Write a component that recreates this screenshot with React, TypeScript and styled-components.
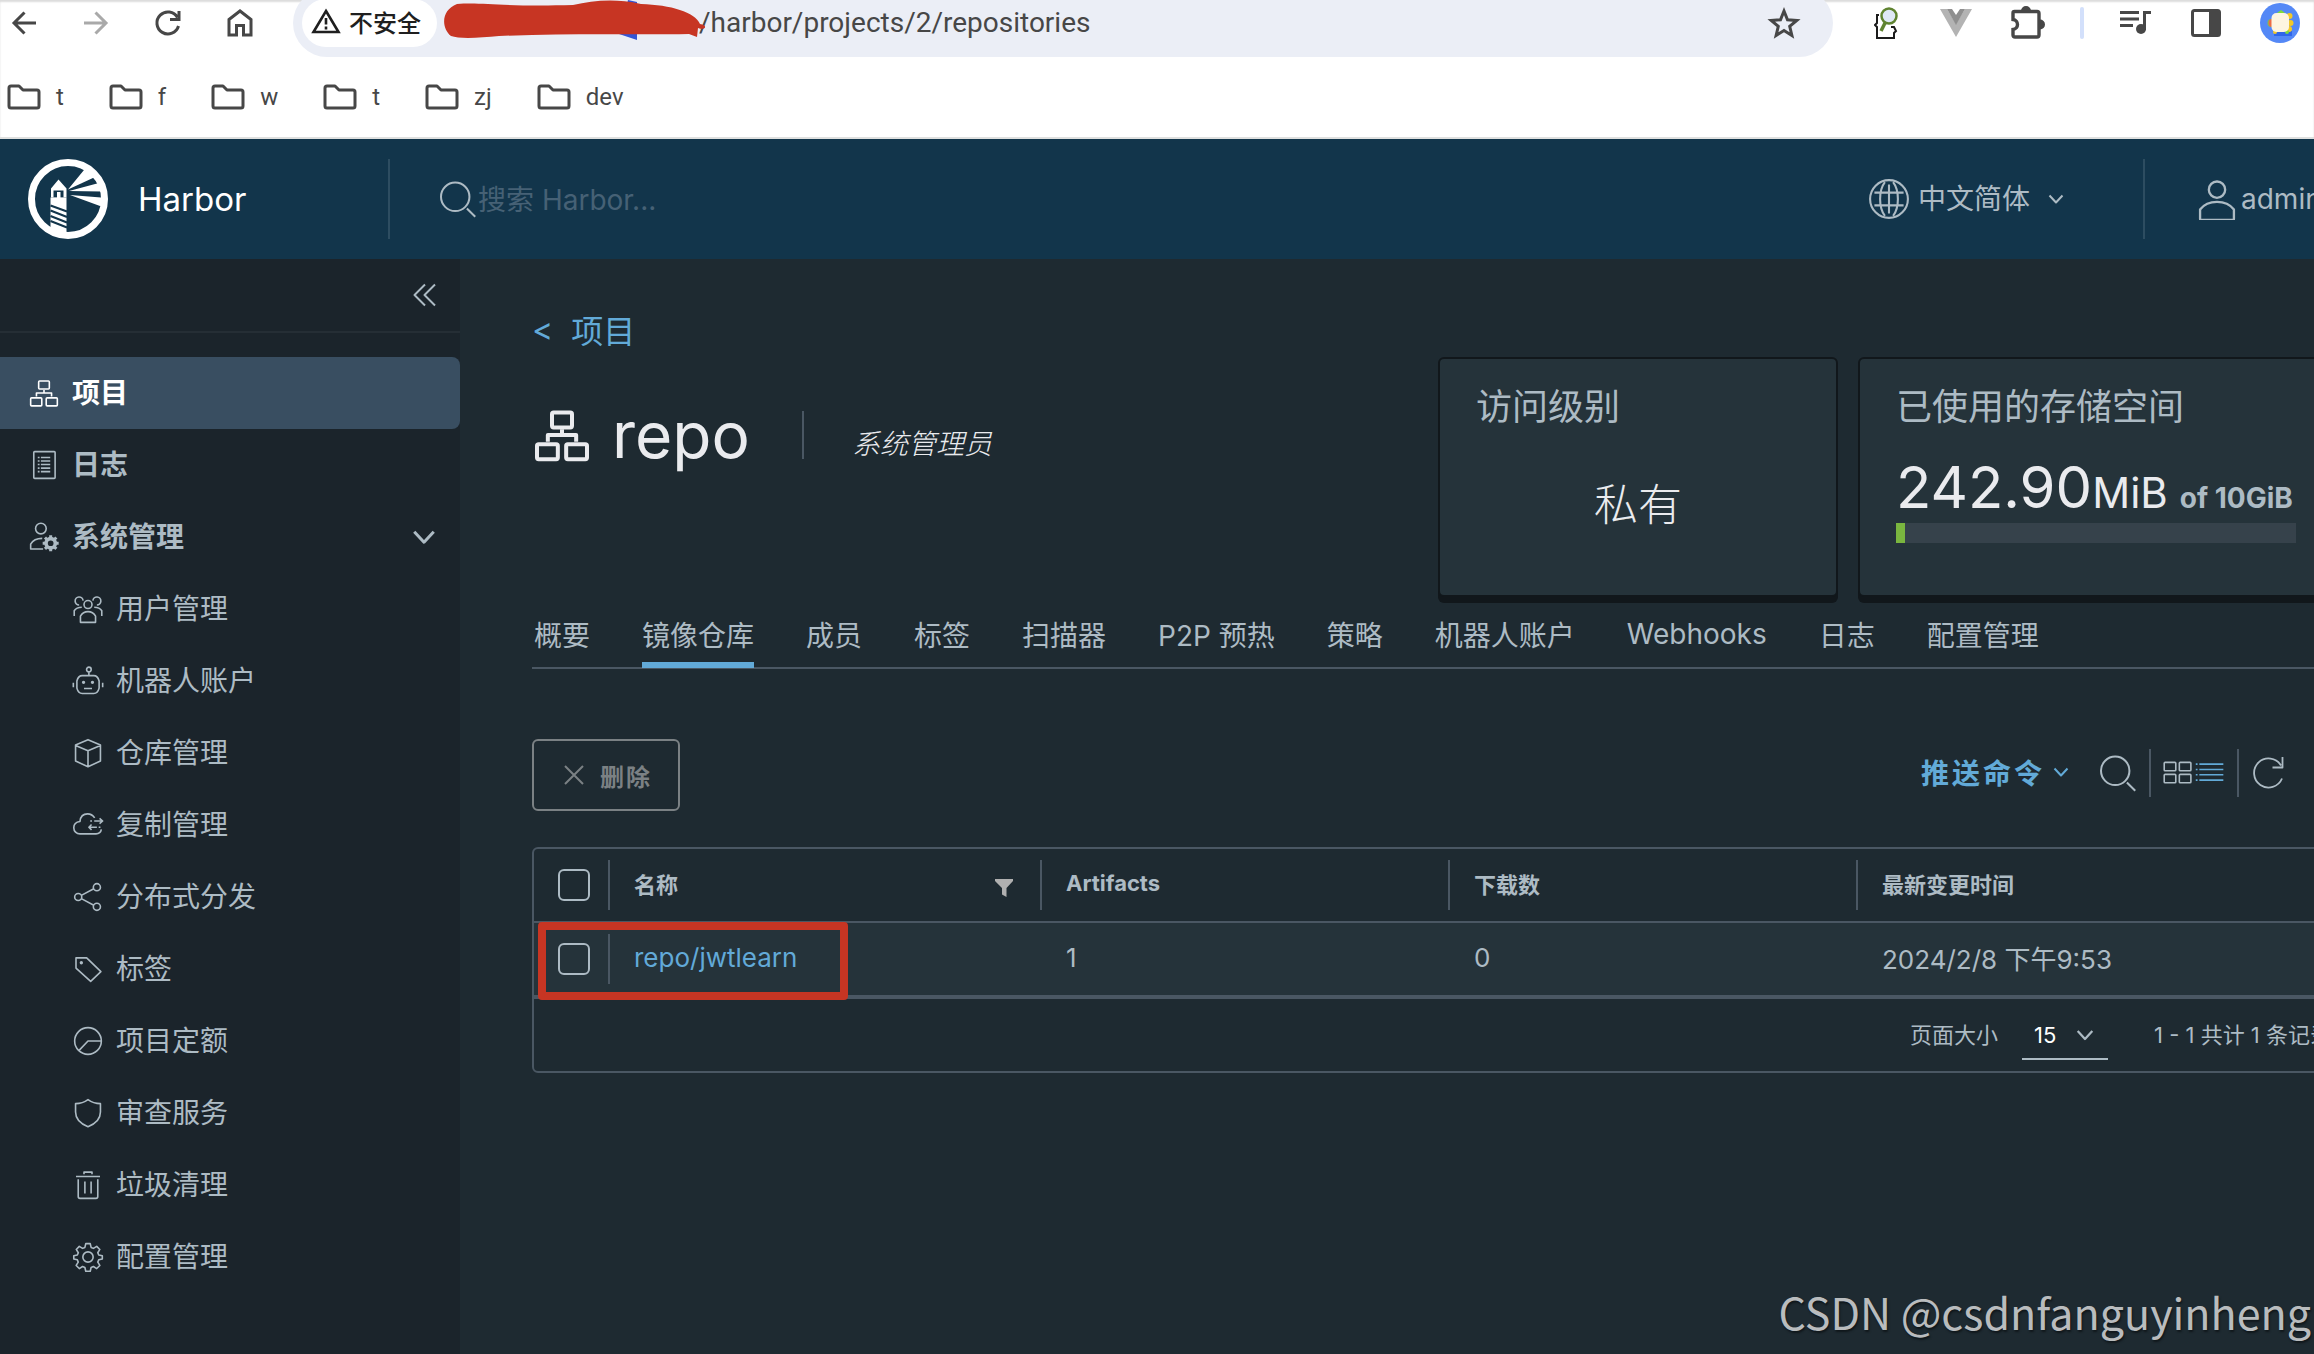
import React from "react";
import styled, { createGlobalStyle, css } from "styled-components";

const c = {
  main: "#1e2a31",
  side: "#1b242b",
  header: "#12354b",
  active: "#394e61",
  panel: "#25333a",
  line: "#4a5763",
  text: "#adbbc4",
  bright: "#eaebee",
  link: "#62aad8",
  chrome: "#474747",
};

const Global = createGlobalStyle`
  * { box-sizing: border-box; }
  html { background: ${c.main}; }
  body {
    margin: 0;
    overflow: hidden;
    background: ${c.main};
    color: ${c.text};
    font-family: Inter, "Noto Sans CJK SC", sans-serif;
    font-size: 28px;
  }
  button, input, select { font: inherit; color: inherit; }
  button { background: none; border: 0; padding: 0; cursor: pointer; }
  a { color: inherit; text-decoration: none; }
  svg { display: block; flex: none; }
`;

/* ---------- icons ---------- */

type IconProps = { size?: number; stroke?: number; children?: React.ReactNode; box?: string };

const Icon = ({ size = 32, stroke = 1.8, box = "0 0 36 36", children }: IconProps) => (
  <svg
    width={size}
    height={size}
    viewBox={box}
    fill="none"
    stroke="currentColor"
    strokeWidth={stroke}
    strokeLinecap="butt"
    strokeLinejoin="round"
    aria-hidden="true"
  >
    {children}
  </svg>
);

const OrgIcon = ({ size, stroke }: IconProps) => (
  <Icon size={size} stroke={stroke}>
    <rect x="12" y="4.5" width="12" height="9" rx="1" />
    <rect x="3" y="23.5" width="12.5" height="9" rx="1" />
    <rect x="20.5" y="23.5" width="12.5" height="9" rx="1" />
    <path d="M18 14.5v4M9.500 22v-4h17v4" />
  </Icon>
);

const LogIcon = () => (
  <Icon>
    <rect x="6.5" y="3" width="24" height="30" rx="1" />
    <path d="M14.5 9.5h10.5M14.5 13.5h10.5M14.5 17.5h10.5M14.5 21.5h10.5M14.5 25.5h10.5M11 9.5h2M11 13.5h2M11 17.5h2M11 21.5h2M11 25.5h2" />
  </Icon>
);

const AdminIcon = () => (
  <Icon>
    <circle cx="14.5" cy="8.5" r="6" />
    <path d="M17 31.500H3v-5.500c2.500-4.500 7-6.500 13-6.500" />
    <circle cx="25.500" cy="25" r="5.200" strokeWidth="4" />
    <path
      strokeWidth="3.400"
      d="M25.500 16v3M25.500 31v3M16.500 25h3M31.500 25h3M19.100 18.600l2.200 2.200M29.700 29.200l2.200 2.200M31.900 18.600l-2.200 2.200M21.300 29.200l-2.200 2.200"
    />
  </Icon>
);

const UsersIcon = () => (
  <Icon>
    <circle cx="18" cy="13" r="4.500" />
    <path d="M9.500 33v-7c2-3.500 5-5 8.500-5s6.500 1.500 8.500 5v7z" />
    <path d="M12.500 8.500A4.500 4.500 0 1 0 8 13.500M23.500 8.500A4.500 4.500 0 1 1 28 13.500M11 16c-4 0-7 1.500-8.500 4v6M25 16c4 0 7 1.500 8.500 4v6" />
  </Icon>
);

const RobotIcon = () => (
  <Icon>
    <circle cx="19" cy="5" r="2.600" />
    <path d="M19 8v4M5.500 18c1-4 3-6 6-6h13c3 0 5 2 6 6v8c-1 4-3 6-6 6h-13c-3 0-5-2-6-6zM1.500 20v5M34.500 20v5M13.500 26.500h9" />
    <circle cx="13" cy="19.500" r="1" fill="currentColor" />
    <circle cx="23" cy="19.500" r="1" fill="currentColor" />
  </Icon>
);

const CubeIcon = () => (
  <Icon>
    <path d="M18 3l14 6v18l-14 6.500L4 27V9zM4 9.500l14 6 14-6M18 15.500V33" />
  </Icon>
);

const CloudIcon = () => (
  <Icon>
    <path d="M25.500 10C23.500 7 20.500 5.500 17.500 5.500c-4.500 0-8 3-8.500 8.500-4.500.5-7 3.500-7 7 0 4 3 7 7 7h18c3.500 0 5.500-2 6-5" />
    <path d="M25 13.500h9M31 10.500l3.500 3-3.500 3M20.500 13.500h2M28 20.500h-9M22 17.500l-3 3 3 3M30 20.500h2" />
  </Icon>
);

const ShareIcon = () => (
  <Icon>
    <circle cx="7" cy="18" r="4" />
    <circle cx="28" cy="7" r="4" />
    <circle cx="28" cy="29" r="4" />
    <path d="M10.500 16.200l14-7.400M10.500 19.800l14 7.400" />
  </Icon>
);

const TagIcon = () => (
  <Icon>
    <path d="M4.500 5.500h12L32.500 21 21 32 4.500 17z" />
    <circle cx="10.500" cy="11" r="1" fill="currentColor" />
  </Icon>
);

const PieIcon = () => (
  <Icon>
    <circle cx="18" cy="18" r="15" />
    <path d="M33 18H18L8 28.500" />
  </Icon>
);

const ShieldIcon = () => (
  <Icon>
    <path d="M18 3c4 3 9 4.500 14 4.500V17c0 8-5 13-14 16.500C9 30 4 25 4 17V7.500C9 7.500 14 6 18 3z" />
  </Icon>
);

const TrashIcon = () => (
  <Icon>
    <path d="M4.500 8.500h27M7 11.500V31c0 1.300.8 2 2 2h18c1.200 0 2-.7 2-2V11.500M14.500 14v13.500M21.500 14v13.500M13.500 6V3.500h9V6" />
  </Icon>
);

const GearIcon = () => (
  <Icon>
    <circle cx="18" cy="18" r="5.800" />
    <path d="M15.500 3h5l1 4.200 2.600 1.100 3.700-2.300 3.500 3.500-2.300 3.700 1.100 2.600 4 .9v3.600l-4 .9-1.100 2.600 2.300 3.700-3.500 3.500-3.700-2.300-2.600 1.100-1 4.200h-5l-1-4.200-2.600-1.100-3.700 2.300-3.500-3.500 2.300-3.700L6 21.200l-4-.9v-3.600l4-.9 1.100-2.600-2.300-3.700L8.200 6l3.700 2.300 2.600-1.100z" />
  </Icon>
);

const SearchIcon = () => (
  <Icon size={40}>
    <circle cx="15.500" cy="16" r="12.800" />
    <path d="M26 26.500l7.500 7.500" />
  </Icon>
);

const GlobeIcon = () => (
  <Icon size={42}>
    <circle cx="18" cy="18" r="16.200" />
    <path d="M5.500 12.500h25M5.500 23.500h25M18 5.500v25M14.500 3.500C9 10.500 9 25.500 14.500 32.500M21.500 3.500C27 10.500 27 25.500 21.500 32.500" />
  </Icon>
);

const UserIcon = () => (
  <Icon size={42} stroke={2}>
    <circle cx="18" cy="10" r="7" />
    <path d="M3.500 35v-8c3.500-4.500 8.500-6.500 14.500-6.500s11 2 14.500 6.500v8c0 .5-.5 1-1 1h-27c-.5 0-1-.5-1-1z" />
  </Icon>
);

const Caret = ({ size = 16, stroke = 2 }: IconProps) => (
  <Icon size={size} stroke={stroke} box="0 0 16 16">
    <path d="M1.500 4.500l6.500 7 6.500-7" />
  </Icon>
);

const GridIcon = () => (
  <Icon size={32}>
    <rect x="2.500" y="6" width="13" height="9.500" rx="1" />
    <rect x="19.500" y="6" width="13" height="9.500" rx="1" />
    <rect x="2.500" y="19.500" width="13" height="9.500" rx="1" />
    <rect x="19.500" y="19.500" width="13" height="9.500" rx="1" />
  </Icon>
);

const ListIcon = () => (
  <Icon size={32}>
    <path d="M2 8h2M6 8h27M2 14h2M6 14h27M2 20h2M6 20h27M2 26h2M6 26h27" />
  </Icon>
);

const RefreshIcon = () => (
  <Icon size={36}>
    <path d="M32 23.500A14.500 14.500 0 1 1 31 10.500M32.500 2v10.500H22.500" />
  </Icon>
);

const FolderIcon = () => (
  <svg width="34" height="26" viewBox="0 0 34 26" fill="none" stroke="currentColor" strokeWidth="3" aria-hidden="true">
    <path d="M4 2h8l4 4h14q2 0 2 2v14q0 2-2 2H4q-2 0-2-2V4q0-2 2-2z" strokeLinejoin="round" />
  </svg>
);

const HarborLogo = () => (
  <svg width="80" height="80" viewBox="0 0 80 80" aria-hidden="true">
    <circle cx="40" cy="40" r="36.500" fill="none" stroke="#fff" strokeWidth="7" />
    <path fill="#fff" d="M40 30.500L56 11l11 0-1 7.500zM41 32l28-7.500h5v8zM42 36l31 2.500 2 8-3 .5z" />
    <path fill="#fff" d="M30.500 20.500l8 9H23zM23 29.500h15.500v9H23z" />
    <path fill={c.header} d="M25.500 31.500h10v7h-10z" />
    <path fill="#fff" d="M29 33h3.500v5.500H29zM22.500 38.500h16V75l-16-5z" />
    <path stroke={c.header} strokeWidth="2" d="M22.500 46.500l16.500 6M22.500 51.500l16.500 6.500M22.500 57l16.500 6.500M22.500 62l16.500 6.500" />
  </svg>
);

/* ---------- browser chrome ---------- */

const Browser = styled.header`
  position: relative;
  height: 139px;
  background: #fff;
  border-bottom: 2px solid #dfe0df;
  color: ${c.chrome};
  font-family: Roboto, "Noto Sans CJK SC", sans-serif;
  overflow: hidden;
  box-shadow: inset 0 2px 2px #dcdcdc;
`;

const Toolbar = styled.div`
  display: flex;
  align-items: center;
  height: 68px;
  margin-top: -11px;
  padding: 0 14px 0 8px;
`;

const NavButtons = styled.div`
  display: flex;
  gap: 40px;
  margin-right: 37px;
`;

const ChromeButton = styled.button<{ $dim?: boolean }>`
  display: flex;
  align-items: center;
  justify-content: center;
  min-width: 32px;
  height: 40px;
  color: ${(p) => (p.$dim ? "#a9a9a9" : c.chrome)};
`;

const Omnibox = styled.div`
  position: relative;
  display: flex;
  flex: 1;
  align-items: center;
  height: 68px;
  padding: 0 32px 0 9px;
  border-radius: 34px;
  background: #ebeef6;
`;

const SecurityChip = styled.button`
  display: flex;
  align-items: center;
  gap: 8px;
  height: 48px;
  padding: 0 16px 4px 9px;
  border-radius: 24px;
  background: #fff;
  color: #1f1f1f;
  font-size: 24px;
  font-weight: 500;
`;

const Address = styled.span`
  flex: 1;
  padding-left: 262px;
  font-size: 28px;
  line-height: 40px;
`;

const Scribble = styled.svg`
  position: absolute;
  left: 150px;
  top: 11px;
`;

const Extensions = styled.div`
  display: flex;
  align-items: center;
  gap: 38px;
  margin-left: 37px;
`;

const ExtensionRule = styled.span`
  width: 4px;
  height: 32px;
  margin: 0 -2px 0 -4px;
  border-radius: 2px;
  background: #d3e0fb;
`;

const Bookmarks = styled.nav`
  display: flex;
  align-items: center;
  gap: 45px;
  height: 80px;
  padding-left: 7px;
  font-size: 24px;
`;

const Bookmark = styled.a`
  display: flex;
  align-items: center;
  gap: 15px;
`;

const BrowserChrome = () => (
  <Browser>
    <Toolbar>
      <NavButtons>
        <ChromeButton aria-label="后退">
          <svg width="26" height="26" viewBox="0 0 26 26" fill="none" stroke="currentColor" strokeWidth="3">
            <path d="M25 13H3M13.500 2.500L3 13l10.500 10.500" />
          </svg>
        </ChromeButton>
        <ChromeButton $dim aria-label="前进">
          <svg width="26" height="26" viewBox="0 0 26 26" fill="none" stroke="currentColor" strokeWidth="3">
            <path d="M1 13h22M12.500 2.500L23 13 12.500 23.500" />
          </svg>
        </ChromeButton>
        <ChromeButton aria-label="重新加载">
          <svg width="28" height="28" viewBox="0 0 28 28" fill="none" stroke="currentColor" strokeWidth="3">
            <path d="M24.500 17A11 11 0 1 1 23.500 8.500M25 2v8.500h-9" />
          </svg>
        </ChromeButton>
        <ChromeButton aria-label="主页">
          <svg width="28" height="30" viewBox="0 0 28 30" fill="none" stroke="currentColor" strokeWidth="3">
            <path d="M3 11.500L14 3l11 8.500V27h-7.500v-9.500h-7V27H3z" />
          </svg>
        </ChromeButton>
      </NavButtons>
      <Omnibox>
        <SecurityChip>
          <svg width="30" height="26" viewBox="0 0 30 26" fill="none" stroke="currentColor" strokeWidth="2.600">
            <path d="M15 3l12.500 21h-25zM15 10v6.500M15 18.500v3" />
          </svg>
          不安全
        </SecurityChip>
        <Address>/harbor/projects/2/repositories</Address>
        <ChromeButton aria-label="收藏">
          <svg width="34" height="34" viewBox="0 0 34 34" fill="none" stroke="currentColor" strokeWidth="3">
            <path d="M17 5l3.500 8.700 9.300.7-7.100 6 2.200 9.100L17 24.600l-7.900 4.900 2.200-9.100-7.100-6 9.300-.7z" />
          </svg>
        </ChromeButton>
        <Scribble width="266" height="42" viewBox="0 0 266 42" aria-hidden="true">
          <path fill="#3355d6" d="M185 0l9 2v38l-18-6z" />
          <path
            fill="#c73523"
            d="M14 4C40 2 60 7 130 5c20-4 40-7 68-1 30 1 54 8 59 20 8 1 6 7-2 4l-1 9-8-3c-50 1-120-1-190 2-20 2-40 3-48 0C-2 28-2 10 14 4z"
          />
        </Scribble>
      </Omnibox>
      <Extensions>
        <ChromeButton aria-label="JSON 查看器">
          <svg width="24" height="32" viewBox="0 0 24 32" fill="none">
            <path d="M5 8H3v8l-2 2 2 2v11h17v-5l2-2-2-4h-3" stroke="#1c1c1c" strokeWidth="2" />
            <circle cx="15" cy="9" r="7.500" fill="#dfe8f6" stroke="#5f8330" strokeWidth="2.500" />
            <path d="M11 16l-4 8" stroke="#5f8330" strokeWidth="3.500" />
          </svg>
        </ChromeButton>
        <ChromeButton aria-label="Vue 开发工具">
          <svg width="32" height="28" viewBox="0 0 32 28">
            <path d="M0 0h7l9 15 9-15h7L16 28z" fill="#b3b3b3" />
            <path d="M7 0h5l4 6 4-6h5l-9 16z" fill="#8f8f8f" />
          </svg>
        </ChromeButton>
        <ChromeButton aria-label="扩展程序">
          <svg width="36" height="34" viewBox="0 0 36 34">
            <path
              d="M3 7q0-1.500 1.500-1.500H27q2 0 2 2V29q0 2-2 2H5q-2 0-2-2v-5.500c6-.5 6-9.500 0-10z"
              fill="none"
              stroke="currentColor"
              strokeWidth="3.400"
            />
            <path d="M11 5a5 5 0 0 1 10 0zM30 13.500a5 5 0 0 1 0 10z" fill="currentColor" />
          </svg>
        </ChromeButton>
        <ExtensionRule />
        <ChromeButton aria-label="媒体控制">
          <svg width="32" height="26" viewBox="0 0 32 26" fill="none" stroke="currentColor" strokeWidth="3">
            <path d="M0 2.500h19M0 9h19M0 15.500h13M24.500 20V2.500H31" />
            <circle cx="21" cy="19" r="5" fill="currentColor" stroke="none" />
          </svg>
        </ChromeButton>
        <ChromeButton aria-label="侧边栏">
          <svg width="30" height="28" viewBox="0 0 30 28">
            <rect x="1.500" y="1.500" width="27" height="25" rx="2" fill="none" stroke="currentColor" strokeWidth="3" />
            <path d="M18 1h11v26H18z" fill="currentColor" />
          </svg>
        </ChromeButton>
        <ChromeButton aria-label="个人资料">
          <svg width="40" height="40" viewBox="0 0 40 40">
            <circle cx="20" cy="20" r="20" fill="#5488f6" />
            <path d="M14 28h18v5H14z" fill="#2f66ea" />
            <circle cx="29.500" cy="13" r="3" fill="#f4c928" />
            <circle cx="30.500" cy="20" r="3" fill="#f4c928" />
            <circle cx="29" cy="26" r="3" fill="#f4c928" />
            <circle cx="15" cy="29" r="2" fill="#f4c928" />
            <circle cx="27" cy="29" r="2" fill="#7ddc3c" />
            <circle cx="11.500" cy="20" r="4" fill="#7cc84a" />
            <path d="M17 10l4-3 4 3z" fill="#7ddc3c" />
            <circle cx="12.500" cy="20" r="4" fill="#ec6b46" />
            <rect x="11.500" y="10" width="17.500" height="19" rx="5" fill="#fdf5e0" />
          </svg>
        </ChromeButton>
      </Extensions>
    </Toolbar>
    <Bookmarks aria-label="书签">
      {["t", "f", "w", "t", "zj", "dev"].map((name, i) => (
        <Bookmark href="#" key={i}>
          <FolderIcon />
          {name}
        </Bookmark>
      ))}
    </Bookmarks>
  </Browser>
);

/* ---------- application header ---------- */

/* The app's own canvas runs wider than the window; the excess is clipped on the right. */
const Viewport = styled.div`
  position: relative;
  display: flex;
  flex-direction: column;
  min-height: 100vh;
  overflow: hidden;
`;

const Canvas = styled.div`
  display: flex;
  flex: 1;
  flex-direction: column;
  width: calc(100% + 88px);
`;

const AppHeader = styled.header`
  display: flex;
  align-items: center;
  height: 120px;
  padding-left: 28px;
  background: ${c.header};
`;

const Brand = styled.a`
  display: flex;
  align-items: center;
  gap: 30px;
  width: 360px;
  color: #fff;
  font-size: 33px;
`;

const HeaderRule = styled.span`
  width: 2px;
  height: 80px;
  background: #2d4d61;
`;

const SearchBox = styled.label`
  display: flex;
  flex: 1;
  align-items: center;
  padding-left: 48px;
`;

const SearchInput = styled.input`
  width: 480px;
  padding: 2px 0 0;
  border: 0;
  outline: 0;
  background: transparent;
  &::placeholder {
    color: #466175;
    opacity: 1;
  }
`;

const HeaderButton = styled.button<{ $wide?: boolean }>`
  display: flex;
  align-items: center;
  gap: ${(p) => (p.$wide ? "8px" : "3px")};
  ${(p) =>
    p.$wide
      ? css`
          margin-right: 79px;
        `
      : css`
          width: 257px;
          padding-left: 51px;
        `}
`;

const HeaderText = styled.span`
  padding-bottom: 4px;
`;

const CaretSlot = styled.span`
  padding-left: 10px;
`;

/* ---------- sidebar ---------- */

const Body = styled.div`
  display: flex;
  flex: 1;
`;

const Sidebar = styled.nav`
  flex: none;
  width: 460px;
  background: ${c.side};
`;

const CollapseBar = styled.div`
  display: flex;
  align-items: center;
  justify-content: flex-end;
  height: 74px;
  margin-bottom: 24px;
  padding-right: 22px;
  border-bottom: 2px solid #252e35;
`;

const NavItem = styled.a<{ $active?: boolean; $sub?: boolean }>`
  display: flex;
  align-items: center;
  gap: 12px;
  height: 72px;
  padding: 0 24px 0 ${(p) => (p.$sub ? "72px" : "28px")};
  font-weight: ${(p) => (p.$sub ? 400 : 700)};
  ${(p) =>
    p.$active &&
    css`
      border-radius: 0 8px 8px 0;
      background: ${c.active};
      color: #fff;
    `}
`;

const NavLabel = styled.span`
  flex: 1;
  padding-bottom: 4px;
`;

const subItems: [string, () => React.ReactElement][] = [
  ["用户管理", UsersIcon],
  ["机器人账户", RobotIcon],
  ["仓库管理", CubeIcon],
  ["复制管理", CloudIcon],
  ["分布式分发", ShareIcon],
  ["标签", TagIcon],
  ["项目定额", PieIcon],
  ["审查服务", ShieldIcon],
  ["垃圾清理", TrashIcon],
  ["配置管理", GearIcon],
];

/* ---------- project page ---------- */

const Main = styled.main`
  flex: 1;
  min-width: 0;
  padding: 46px 48px 0 72px;
`;

const Breadcrumb = styled.a`
  display: flex;
  align-items: center;
  gap: 18px;
  height: 52px;
  padding-bottom: 4px;
  color: ${c.link};
  font-size: 32px;
`;

const BreadcrumbMark = styled.span`
  font-size: 32px;
`;

const Summary = styled.section`
  display: flex;
  align-items: flex-start;
  gap: 20px;
  height: 246px;
`;

const TitleRow = styled.div`
  display: flex;
  flex: 1;
  align-items: center;
  margin-top: 38px;
  color: ${c.bright};
`;

const Title = styled.h1`
  margin: 0 52px 0 20px;
  font-size: 64px;
  font-weight: 400;
  line-height: 80px;
`;

const TitleRule = styled.span`
  width: 2px;
  height: 48px;
  background: ${c.line};
`;

const Role = styled.em`
  margin: 18px 0 0 48px;
  font-size: 28px;
  font-weight: 300;
  line-height: 40px;
`;

const Card = styled.section<{ $wide?: boolean }>`
  flex: none;
  width: ${(p) => (p.$wide ? "496px" : "400px")};
  height: 240px;
  padding: 20px 36px;
  border: 2px solid #11171b;
  border-radius: 6px;
  background: ${c.panel};
  box-shadow: 0 6px 0 #11171b;
`;

const CardTitle = styled.h2`
  margin: 0;
  font-size: 36px;
  font-weight: 400;
  line-height: 56px;
`;

const Access = styled.p`
  margin: 38px 0 0;
  color: ${c.bright};
  font-size: 44px;
  font-weight: 300;
  line-height: 64px;
  text-align: center;
`;

const Usage = styled.p`
  display: flex;
  align-items: baseline;
  margin: 16px 0 0;
  color: ${c.bright};
  font-size: 58px;
  font-weight: 400;
  line-height: 72px;
  white-space: nowrap;
`;

const UsageUnit = styled.span`
  font-size: 42px;
  line-height: 42px;
`;

const UsageLimit = styled.span`
  margin-left: 12px;
  color: ${c.text};
  font-size: 28px;
  font-weight: 700;
  line-height: 28px;
`;

const Meter = styled.div`
  width: 400px;
  height: 20px;
  background: #36424b;
`;

const MeterFill = styled.div`
  height: 100%;
  background: #7ab63f;
`;

const Tabs = styled.nav`
  display: flex;
  gap: 52px;
  height: 66px;
  padding-left: 2px;
  box-shadow: inset 0 -2px 0 ${c.line};
`;

const Tab = styled.a<{ $active?: boolean }>`
  display: flex;
  align-items: center;
  height: 65px;
  padding-top: 2px;
  border-bottom: 6px solid ${(p) => (p.$active ? c.link : "transparent")};
  white-space: nowrap;
`;

const Actions = styled.div`
  display: flex;
  align-items: center;
  justify-content: space-between;
  margin: 70px 0 36px;
`;

const Tools = styled.div`
  display: flex;
  align-items: center;
  padding: 0 68px 4px 0;
`;

const DeleteButton = styled.button`
  display: flex;
  align-items: center;
  gap: 14px;
  height: 72px;
  padding: 0 26px 0 28px;
  border: 2px solid #7b8184;
  border-radius: 6px;
  color: #7b8184;
  font-size: 24px;
  font-weight: 600;
  letter-spacing: 2px;
`;

const PushButton = styled.button`
  display: flex;
  align-items: center;
  gap: 8px;
  margin-right: 29px;
  padding-bottom: 2px;
  color: ${c.link};
  font-weight: 600;
  letter-spacing: 3px;
`;

const IconButton = styled.button<{ $on?: boolean }>`
  color: ${(p) => (p.$on ? c.link : c.text)};
`;

const ActionRule = styled.span`
  width: 2px;
  height: 48px;
  margin: 0 11px;
  background: ${c.line};
`;

const Grid = styled.div`
  position: relative;
  border: 2px solid ${c.line};
  border-radius: 6px;
`;

const Table = styled.table`
  width: 100%;
  border-spacing: 0;
  table-layout: fixed;
  text-align: left;
`;

const HeadCell = styled.th`
  height: 72px;
  padding: 0;
  font-size: 22px;
  font-weight: 700;
`;

const DataCell = styled.td`
  height: 78px;
  padding: 0;
  border-top: 2px solid ${c.line};
  border-bottom: 4px solid ${c.line};
  background: ${c.panel};
  font-size: 26px;
`;

const CellBody = styled.div<{ $rule?: boolean }>`
  display: flex;
  align-items: center;
  justify-content: space-between;
  height: 50px;
  padding: 0 26px 4px 24px;
  border-left: 2px solid ${(p) => (p.$rule ? c.line : "transparent")};
`;

const FilterButton = styled.button`
  padding-top: 10px;
  color: #b0b0b0;
`;

const Check = styled.input`
  display: block;
  width: 32px;
  height: 32px;
  margin: 0 0 0 24px;
  appearance: none;
  border: 2px solid ${c.text};
  border-radius: 6px;
`;

const RepoLink = styled.a`
  color: ${c.link};
`;

const Footer = styled.div`
  display: flex;
  align-items: center;
  justify-content: flex-end;
  height: 72px;
  padding: 0 20px 4px 0;
  font-size: 22px;
  white-space: nowrap;
`;

const PageSize = styled.label`
  display: flex;
  align-items: center;
  gap: 24px;
  margin-right: 46px;
`;

const SelectWrap = styled.span`
  display: flex;
  align-items: center;
  width: 86px;
  height: 48px;
  margin-top: 6px;
  padding-right: 14px;
  border-bottom: 2px solid ${c.text};
`;

const Select = styled.select`
  flex: 1;
  min-width: 0;
  padding: 0 0 0 12px;
  border: 0;
  outline: 0;
  appearance: none;
  background: transparent;
  color: #fff;
`;

const Highlight = styled.div`
  position: absolute;
  left: 4px;
  top: 73px;
  width: 310px;
  height: 78px;
  border: 8px solid #c73523;
  border-radius: 4px;
  pointer-events: none;
`;

const Watermark = styled.div`
  position: absolute;
  right: 3px;
  bottom: 11px;
  color: #b9bcbe;
  font-family: "Noto Sans CJK SC", sans-serif;
  font-size: 43px;
  line-height: 64px;
  text-shadow: 1px 2px 2px #10171b;
`;

const tabs = ["概要", "镜像仓库", "成员", "标签", "扫描器", "P2P 预热", "策略", "机器人账户", "Webhooks", "日志", "配置管理"];

const used = 242.9;
const quota = 10240;

export default function App() {
  return (
    <Viewport>
      <Global />
      <BrowserChrome />
      <Canvas>
        <AppHeader>
          <Brand href="#">
            <HarborLogo />
            Harbor
          </Brand>
          <HeaderRule />
          <SearchBox>
            <SearchIcon />
            <SearchInput type="text" placeholder="搜索 Harbor..." aria-label="搜索 Harbor" />
          </SearchBox>
          <HeaderButton $wide>
            <GlobeIcon />
            <HeaderText>中文简体</HeaderText>
            <CaretSlot>
              <Caret />
            </CaretSlot>
          </HeaderButton>
          <HeaderRule />
          <HeaderButton>
            <UserIcon />
            admin
          </HeaderButton>
        </AppHeader>

        <Body>
          <Sidebar aria-label="主导航">
            <CollapseBar>
              <IconButton aria-label="收起">
                <Icon size={28} box="0 0 28 28" stroke={2}>
                  <path d="M15 3.500L4.500 14 15 24.500M25 3.500L14.500 14 25 24.500" />
                </Icon>
              </IconButton>
            </CollapseBar>
            <NavItem href="#" $active>
              <OrgIcon />
              <NavLabel>项目</NavLabel>
            </NavItem>
            <NavItem href="#">
              <LogIcon />
              <NavLabel>日志</NavLabel>
            </NavItem>
            <NavItem href="#">
              <AdminIcon />
              <NavLabel>系统管理</NavLabel>
              <Caret size={24} />
            </NavItem>
            {subItems.map(([label, Glyph]) => (
              <NavItem href="#" key={label} $sub>
                <Glyph />
                <NavLabel>{label}</NavLabel>
              </NavItem>
            ))}
          </Sidebar>

          <Main>
            <Breadcrumb href="#">
              <BreadcrumbMark>&lt;</BreadcrumbMark>项目
            </Breadcrumb>
            <Summary>
              <TitleRow>
                <OrgIcon size={60} stroke={2.4} />
                <Title>repo</Title>
                <TitleRule />
                <Role>系统管理员</Role>
              </TitleRow>
              <Card>
                <CardTitle>访问级别</CardTitle>
                <Access>私有</Access>
              </Card>
              <Card $wide>
                <CardTitle>已使用的存储空间</CardTitle>
                <Usage>
                  242.90<UsageUnit>MiB</UsageUnit>
                  <UsageLimit>of 10GiB</UsageLimit>
                </Usage>
                <Meter>
                  <MeterFill style={{ width: `${(used / quota) * 100}%` }} />
                </Meter>
              </Card>
            </Summary>

            <Tabs aria-label="项目标签页">
              {tabs.map((t) => (
                <Tab href="#" key={t} $active={t === "镜像仓库"}>
                  {t}
                </Tab>
              ))}
            </Tabs>

            <Actions>
              <DeleteButton disabled>
                <Icon size={24} box="0 0 24 24" stroke={2}>
                  <path d="M3 3l18 18M21 3L3 21" />
                </Icon>
                删除
              </DeleteButton>
              <Tools>
                <PushButton>
                  推送命令
                  <Caret />
                </PushButton>
                <IconButton aria-label="搜索">
                  <SearchIcon />
                </IconButton>
                <ActionRule />
                <IconButton aria-label="卡片视图">
                  <GridIcon />
                </IconButton>
                <IconButton aria-label="列表视图" $on>
                  <ListIcon />
                </IconButton>
                <ActionRule />
                <IconButton aria-label="刷新">
                  <RefreshIcon />
                </IconButton>
              </Tools>
            </Actions>

            <Grid>
              <Table>
                <colgroup>
                  <col width="74" />
                  <col width="432" />
                  <col width="408" />
                  <col width="408" />
                  <col />
                </colgroup>
                <thead>
                  <tr>
                    <HeadCell>
                      <Check type="checkbox" aria-label="全选" />
                    </HeadCell>
                    <HeadCell>
                      <CellBody $rule>
                        名称
                        <FilterButton aria-label="筛选">
                          <svg width="20" height="18" viewBox="0 0 20 18" fill="currentColor">
                            <path d="M1 0h18v2l-6.500 7v9L8 15.500V9L1 2z" />
                          </svg>
                        </FilterButton>
                      </CellBody>
                    </HeadCell>
                    <HeadCell>
                      <CellBody $rule>Artifacts</CellBody>
                    </HeadCell>
                    <HeadCell>
                      <CellBody $rule>下载数</CellBody>
                    </HeadCell>
                    <HeadCell>
                      <CellBody $rule>最新变更时间</CellBody>
                    </HeadCell>
                  </tr>
                </thead>
                <tbody>
                  <tr>
                    <DataCell>
                      <Check type="checkbox" aria-label="选择 repo/jwtlearn" />
                    </DataCell>
                    <DataCell>
                      <CellBody $rule>
                        <RepoLink href="#">repo/jwtlearn</RepoLink>
                      </CellBody>
                    </DataCell>
                    <DataCell>
                      <CellBody>1</CellBody>
                    </DataCell>
                    <DataCell>
                      <CellBody>0</CellBody>
                    </DataCell>
                    <DataCell>
                      <CellBody>2024/2/8 下午9:53</CellBody>
                    </DataCell>
                  </tr>
                </tbody>
              </Table>
              <Footer>
                <PageSize>
                  页面大小
                  <SelectWrap>
                    <Select defaultValue="15">
                      <option>15</option>
                      <option>25</option>
                      <option>50</option>
                    </Select>
                    <Caret size={18} />
                  </SelectWrap>
                </PageSize>
                1 - 1 共计 1 条记录
              </Footer>
              <Highlight />
            </Grid>
          </Main>
        </Body>
      </Canvas>
      <Watermark>CSDN @csdnfanguyinheng</Watermark>
    </Viewport>
  );
}
